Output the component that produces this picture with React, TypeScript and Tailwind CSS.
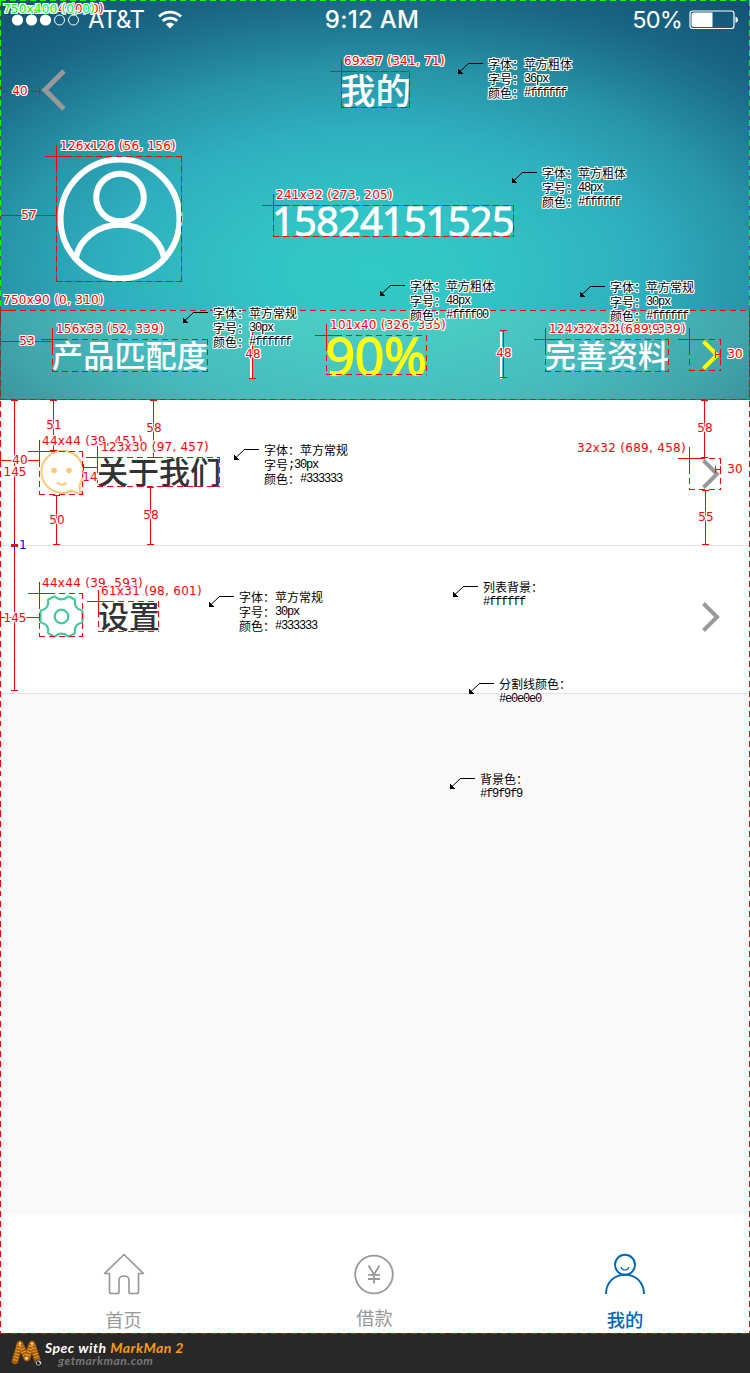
import React from "react";

type Box = { x: number; y: number; w: number; h: number };
type Tag = { text: string; x: number; y: number; w: number };
type Gauge = { dir: "h" | "v"; at: number; from: number; to: number; text: string; cx: number; cy: number };

const BOXES: Box[] = [
  { x: 341, y: 71, w: 69, h: 37 },
  { x: 56, y: 156, w: 126, h: 126 },
  { x: 273, y: 205, w: 241, h: 32 },
  { x: 0, y: 310, w: 750, h: 90 },
  { x: 52, y: 339, w: 156, h: 33 },
  { x: 326, y: 335, w: 101, h: 40 },
  { x: 545, y: 339, w: 124, h: 33 },
  { x: 689, y: 339, w: 32, h: 32 },
  { x: 39, y: 451, w: 44, h: 44 },
  { x: 97, y: 457, w: 123, h: 30 },
  { x: 689, y: 458, w: 32, h: 32 },
  { x: 39, y: 593, w: 44, h: 44 },
  { x: 98, y: 601, w: 61, h: 31 },
];

const TAGS: Tag[] = [
  { text: "69x37 (341, 71)", x: 344, y: 61, w: 101 },
  { text: "126x126 (56, 156)", x: 60, y: 146, w: 116 },
  { text: "241x32 (273, 205)", x: 276, y: 195, w: 117 },
  { text: "750x90 (0, 310)", x: 3, y: 300, w: 101 },
  { text: "156x33 (52, 339)", x: 56, y: 329, w: 108 },
  { text: "101x40 (326, 335)", x: 330, y: 325, w: 116 },
  { text: "124x32 (545, 339)", x: 549, y: 329, w: 116 },
  { text: "32x32 (689, 339)", x: 577, y: 329, w: 109 },
  { text: "44x44 (39, 451)", x: 42, y: 441, w: 101 },
  { text: "123x30 (97, 457)", x: 101, y: 447, w: 108 },
  { text: "32x32 (689, 458)", x: 577, y: 448, w: 109 },
  { text: "44x44 (39, 593)", x: 42, y: 583, w: 101 },
  { text: "61x31 (98, 601)", x: 101, y: 591, w: 101 },
];

const GAUGES: Gauge[] = [
  { dir: "h", at: 91, from: 0, to: 39, text: "40", cx: 20, cy: 91 },
  { dir: "h", at: 215, from: 0, to: 56, text: "57", cx: 29, cy: 215 },
  { dir: "h", at: 341, from: 0, to: 52, text: "53", cx: 27, cy: 341 },
  { dir: "v", at: 252, from: 331, to: 378, text: "48", cx: 253, cy: 354 },
  { dir: "v", at: 503, from: 330, to: 377, text: "48", cx: 504, cy: 353 },
  { dir: "v", at: 53, from: 400, to: 450, text: "51", cx: 54, cy: 425 },
  { dir: "v", at: 153, from: 400, to: 457, text: "58", cx: 154, cy: 428 },
  { dir: "v", at: 704, from: 400, to: 457, text: "58", cx: 705, cy: 428 },
  { dir: "h", at: 460, from: 0, to: 39, text: "40", cx: 20, cy: 460 },
  { dir: "h", at: 467, from: 83, to: 97, text: "14", cx: 90, cy: 477 },
  { dir: "v", at: 14, from: 400, to: 545, text: "145", cx: 15, cy: 472 },
  { dir: "v", at: 56, from: 495, to: 544, text: "50", cx: 57, cy: 520 },
  { dir: "v", at: 150, from: 487, to: 544, text: "58", cx: 151, cy: 515 },
  { dir: "v", at: 705, from: 490, to: 544, text: "55", cx: 706, cy: 517 },
  { dir: "h", at: 354, from: 715, to: 720, text: "30", cx: 735, cy: 354 },
  { dir: "h", at: 469, from: 715, to: 720, text: "30", cx: 735, cy: 469 },
  { dir: "h", at: 617, from: 0, to: 39, text: "", cx: 0, cy: 0 },
  { dir: "v", at: 14, from: 546, to: 690, text: "145", cx: 15, cy: 618 },
];

const NOTES: { x: number; y: number; lines: [string, string][] }[] = [
  { x: 458, y: 73, lines: [["字体：苹方粗体", ""], ["字号：", "36px"], ["颜色：", "#ffffff"]] },
  { x: 512, y: 182, lines: [["字体：苹方粗体", ""], ["字号：", "48px"], ["颜色：", "#ffffff"]] },
  { x: 183, y: 322, lines: [["字体：苹方常规", ""], ["字号：", "30px"], ["颜色：", "#ffffff"]] },
  { x: 380, y: 295, lines: [["字体：苹方粗体", ""], ["字号：", "48px"], ["颜色：", "#ffff00"]] },
  { x: 580, y: 296, lines: [["字体：苹方常规", ""], ["字号：", "30px"], ["颜色：", "#ffffff"]] },
  { x: 234, y: 459, lines: [["字体：苹方常规", ""], ["字号", ";30px"], ["颜色：", "#333333"]] },
  { x: 209, y: 606, lines: [["字体：苹方常规", ""], ["字号：", "30px"], ["颜色：", "#333333"]] },
  { x: 453, y: 596, lines: [["列表背景：", ""], ["", "#ffffff"]] },
  { x: 469, y: 693, lines: [["分割线颜色：", ""], ["", "#e0e0e0"]] },
  { x: 450, y: 788, lines: [["背景色：", ""], ["", "#f9f9f9"]] },
];

const HALO =
  "[text-shadow:1px_0_#fff,-1px_0_#fff,0_1px_#fff,0_-1px_#fff,1px_1px_#fff,-1px_-1px_#fff,1px_-1px_#fff,-1px_1px_#fff]";

const outline = (b: Box) =>
  `M${b.x} ${b.y + 0.5}H${b.x + b.w}M${b.x} ${b.y + b.h - 0.5}H${b.x + b.w}M${b.x + 0.5} ${b.y}V${b.y + b.h}M${b.x + b.w - 0.5} ${b.y}V${b.y + b.h}`;

function Label({ text, x, y, w, color }: Tag & { color: string }) {
  const natural = [...text].reduce((sum, c) => {
    if (/[0-9]/.test(c)) return sum + 7.635;
    if (c === "x") return sum + 7.1;
    if (c === "(" || c === ")") return sum + 4.68;
    return sum + 3.81;
  }, 0);
  return (
    <span
      className={`absolute whitespace-nowrap font-['DejaVu_Sans',sans-serif] text-[12px] leading-[14px] ${color} ${HALO}`}
      style={{ left: x, top: y - 7, letterSpacing: `${(w - natural) / text.length}px` }}
    >
      {text}
    </span>
  );
}

function GaugeLabel({ text, cx, cy }: { text: string; cx: number; cy: number }) {
  return (
    <span
      className={`absolute flex w-10 justify-center font-['DejaVu_Sans',sans-serif] text-[12px] leading-[14px] text-[#f00] ${HALO}`}
      style={{ left: cx - 20, top: cy - 7 }}
    >
      {text}
    </span>
  );
}

function SpecOverlay() {
  return (
    <div className="pointer-events-none absolute inset-0 overflow-hidden">
      <svg width="750" height="1373" className="absolute inset-0" fill="none" shapeRendering="crispEdges">
        <g stroke="#f00" strokeWidth="1">
          <path d="M.5 .5V1333.5M749.5 .5V1333.5M.5 1333.5H749.5" strokeDasharray="6 4" />
          {BOXES.map((b) => (
            <g key={`${b.x}-${b.y}`}>
              {b.y < 300 && <path d={outline(b)} stroke="#004b4b55" />}
              <path d={outline(b)} strokeDasharray="6 4" />
              <path d={`M${b.x - 11} ${b.y + 0.5}H${b.x + 15}M${b.x + 0.5} ${b.y - 11}V${b.y + 15}`} />
            </g>
          ))}
          {GAUGES.map((g, i) =>
            g.dir === "h" ? (
              <path key={i} d={`M${g.from} ${g.at + 0.5}H${g.to + 1}M${g.from + 0.5} ${g.at - 3}v7M${g.to + 0.5} ${g.at - 3}v7`} />
            ) : (
              <path key={i} d={`M${g.at + 0.5} ${g.from}V${g.to + 1}M${g.at - 3} ${g.from + 0.5}h7M${g.at - 3} ${g.to + 0.5}h7`} />
            )
          )}
        </g>
        <path d="M14.5 540V550" stroke="#00f" />
        <path d="M11 545H18" stroke="#f00" strokeWidth="2" />
        <path d="M.5 0V400M749.5 0V400M0 .5H750M0 399.5H750" stroke="#0a6b5088" />
        <path d="M.5 0V310M749.5 0V310M0 .5H750" stroke="#0f0" strokeDasharray="6 4" />
        <path d="M0 399.5H750M749.5 310V400" stroke="#f00" strokeDasharray="6 4" />
        <g stroke="#000">
          {NOTES.map((n) => (
            <g key={`${n.x}-${n.y}`}>
              <path shapeRendering="auto" d={`M${n.x + 2} ${n.y - 1.5}L${n.x + 10.5} ${n.y - 9.5}`} />
              <path d={`M${n.x + 10} ${n.y - 9.5}h15`} />
              <path d={`M${n.x} ${n.y - 4}v5h5z`} fill="#000" stroke="none" />
            </g>
          ))}
        </g>
      </svg>
      <Label text="750x1334 (0, 0)" x={3} y={9} w={101} color="text-[#f00]" />
      <Label text="750x400 (0, 0)" x={3} y={9} w={92} color="text-[#0f0]" />
      {TAGS.map((t) => (
        <Label key={t.text} {...t} color="text-[#f00]" />
      ))}
      {GAUGES.filter((g) => g.text).map((g, i) => (
        <GaugeLabel key={i} text={g.text} cx={g.cx} cy={g.cy} />
      ))}
      <span className={`absolute left-[19px] top-[538px] font-['DejaVu_Sans',sans-serif] text-[12px] leading-[14px] text-[#00f] ${HALO}`}>1</span>
      {NOTES.map((n) => (
        <div
          key={`${n.x}-${n.y}`}
          className={`absolute whitespace-nowrap font-['Noto_Sans_CJK_SC',sans-serif] text-[12px] leading-[14.5px] text-black ${HALO}`}
          style={{ left: n.x + 30, top: n.y - 16 }}
        >
          {n.lines.map(([cn, latin]) => (
            <div key={cn + latin} className="flex h-[14.5px] items-center">
              {cn && <span>{cn}</span>}
              {latin && <span className="font-['Liberation_Mono',monospace] text-[12px] tracking-[-1.2px]">{latin}</span>}
            </div>
          ))}
        </div>
      ))}
    </div>
  );
}

function Chevron({ className }: { className: string }) {
  return (
    <svg width="18" height="30" viewBox="0 0 18 30" fill="none" stroke="currentColor" strokeWidth="4" className={className}>
      <path d="M1.5 1.5L15 15L1.5 28.5" />
    </svg>
  );
}

function StatusBar() {
  return (
    <div className="flex h-10 items-center font-[Inter,sans-serif] text-[24px] leading-none text-white">
      <div className="flex w-[250px] items-center pl-[11px]">
        <svg width="70" height="14" viewBox="0 0 70 14" fill="#fff">
          <circle cx="6.5" cy="7" r="5.6" />
          <circle cx="20.5" cy="7" r="5.6" />
          <circle cx="34.5" cy="7" r="5.6" />
          <circle cx="48.5" cy="7" r="5" fill="none" stroke="#fff" />
          <circle cx="62.5" cy="7" r="5" fill="none" stroke="#fff" />
        </svg>
        <span className="ml-[7px] w-[57px] tracking-[-0.6px]">AT&amp;T</span>
        <svg width="24" height="19" viewBox="0 0 24 19" fill="none" stroke="#fff" strokeWidth="2.8" className="ml-[13px] -mt-[2px]">
          <path d="M1 6.6a16 16 0 0 1 22 0" />
          <path d="M4.8 11a10.4 10.4 0 0 1 14.4 0" />
          <path d="M12 18.4l-4.2-4.2a6 6 0 0 1 8.4 0z" fill="#fff" stroke="none" />
        </svg>
      </div>
      <div className="flex w-[244px] justify-center font-medium tracking-[0.3px]">9:12 AM</div>
      <div className="flex flex-1 items-center justify-end pr-[11px]">
        <span className="text-[23.5px] tracking-[-0.8px]">50%</span>
        <svg width="50" height="20" viewBox="0 0 50 20" fill="none" className="ml-[7px]">
          <rect x="1" y="1" width="44" height="17.5" rx="2.5" stroke="#fff" strokeWidth="1.2" />
          <path d="M2.5 4.5a2 2 0 0 1 2-2H23.500v14.500H4.500a2 2 0 0 1-2-2z" fill="#fff" />
          <path d="M46.500 6.500q2.500 1 2.500 3.300t-2.500 3.300z" fill="#fff" />
        </svg>
      </div>
    </div>
  );
}

function Header() {
  return (
    <header className="flex h-[400px] flex-col bg-[radial-gradient(560px_300px_at_50%_68%,#32cac5_0%,#32c4c5_20%,#2fb0bf_47%,#2895a9_67%,#207c96_80%,#1a6685_92%,#135271_112%)] font-['Noto_Sans_CJK_SC',sans-serif]">
      <StatusBar />
      <div className="flex h-[100px] items-center pl-[41px]">
        <svg width="26" height="42" viewBox="0 0 26 42" fill="none" stroke="#999" strokeWidth="5">
          <path d="M23 2L4 21L23 40" />
        </svg>
        <h1 className="-mt-[3px] ml-[273px] text-[35.500px] font-medium leading-[50px] text-white">我的</h1>
      </div>
      <div className="flex h-[170px] items-start pl-[57px] pt-[16px]">
        <svg width="126" height="126" viewBox="0 0 126 126" fill="none" stroke="#fff" strokeWidth="6">
          <circle cx="63" cy="63" r="59.5" />
          <circle cx="63" cy="41.500" r="23.800" />
          <path d="M19 102A44.500 39 0 0 1 107 102" />
        </svg>
        <span className="ml-[89px] mt-[38px] font-['Open_Sans',sans-serif] text-[40px] leading-[54px] tracking-[-0.900px] text-white [-webkit-text-stroke:0.9px_#fff]">15824151525</span>
      </div>
      <div className="flex h-[90px] items-center bg-[rgba(170,240,190,0.2)] text-[31.200px] font-medium leading-[46px] text-white">
        <span className="-mt-[2px] w-[198px] pl-[52px]">
          <span className="whitespace-nowrap">产品匹配度</span>
        </span>
        <div className="ml-[52px] h-[47px] w-[2px] bg-white" />
        <span className="flex w-[248px] justify-center font-['Open_Sans',sans-serif] text-[52px] tracking-[-0.500px] text-[#ffff14] [-webkit-text-stroke:1.4px_#ffff14]">90%</span>
        <div className="h-[47px] w-[2px] bg-white" />
        <span className="-mt-[2px] ml-[43px] whitespace-nowrap text-[31px]">完善资料</span>
        <Chevron className="ml-auto mr-[30px] text-[#ff0]" />
      </div>
    </header>
  );
}

function Smiley() {
  return (
    <svg width="45" height="45" viewBox="0 0 45 45" fill="none" stroke="#ffc877" strokeWidth="2">
      <path d="M41.500 32.500A21 21 0 1 0 33 40.500C36 42.500 39 43.500 42.500 43.200C40.500 40.500 39.800 36.500 41.500 32.500Z" />
      <circle cx="15" cy="20.500" r="2.800" fill="#ffc877" stroke="none" />
      <circle cx="30" cy="20.500" r="2.800" fill="#ffc877" stroke="none" />
      <path d="M18 32.500q5 4.500 9.500 0" />
    </svg>
  );
}

function Gear() {
  return (
    <svg width="45" height="43" viewBox="0 0 45 43" fill="none" stroke="#44c99c" strokeWidth="2.200" strokeLinejoin="round">
      <circle cx="22.500" cy="21.500" r="6.800" />
      <path d="M17 2.200C19.500 5 25.500 5 28 2.200Q29 1.200 30.500 1.800L35 4.200Q36.500 5 36 6.800C35.300 10.500 38 14.500 42 15Q43.500 15.300 43.500 17V26Q43.500 27.700 42 28C38 28.500 35.300 32.500 36 36.200Q36.500 38 35 38.800L30.500 41.200Q29 41.800 28 40.800C25.500 38 19.500 38 17 40.800Q16 41.800 14.500 41.200L10 38.800Q8.500 38 9 36.200C9.700 32.500 7 28.500 3 28Q1.500 27.700 1.500 26V17Q1.500 15.300 3 15C7 14.500 9.700 10.500 9 6.800Q8.500 5 10 4.200L14.500 1.800Q16 1.200 17 2.200Z" />
    </svg>
  );
}

function TabBar() {
  return (
    <nav className="grid h-[119px] grid-cols-3 bg-white pt-[39px] font-['Noto_Sans_CJK_SC',sans-serif] text-[18.300px] leading-[26px] text-[#999]">
      <div className="flex flex-col items-center">
        <svg width="42" height="42" viewBox="0 0 42 42" fill="none" stroke="currentColor" strokeWidth="1.700" strokeLinejoin="round" className="-ml-[2px]">
          <path d="M21 1.500L1.500 20.500H6.500V38.500q0 2 2 2H14q2 0 2-2V27q0-4 5-4t5 4V38.500q0 2 2 2H33.500q2 0 2-2V20.500H40.500Z" />
        </svg>
        <span className="-ml-[3px] mt-[11px]">首页</span>
      </div>
      <div className="flex flex-col items-center">
        <svg width="42" height="42" viewBox="0 0 42 42" fill="none" stroke="currentColor" strokeWidth="1.800" className="-ml-[2px]">
          <circle cx="21" cy="21.500" r="18.800" />
          <path d="M15.500 12.500L21 21.500L26.500 12.500M21 21.500V30.500M15 21.800H27M15 26H27" />
        </svg>
        <span className="-ml-[1px] mt-[9px]">借款</span>
      </div>
      <div className="flex flex-col items-center text-[#0068b7]">
        <svg width="42" height="42" viewBox="0 0 42 42" fill="none" stroke="currentColor" strokeWidth="1.900">
          <circle cx="21" cy="11.800" r="10" />
          <path d="M2 41C2 29.500 10 21.800 21 21.800S40 29.500 40 41" />
          <path d="M17 14q1 3 4 3t4-3" strokeWidth="1.100" />
        </svg>
        <span className="mt-[11px] font-medium">我的</span>
      </div>
    </nav>
  );
}

function Footer() {
  return (
    <footer className="flex h-10 bg-[#282828] font-[Lato,sans-serif] font-bold italic">
      <svg width="34" height="32" viewBox="0 0 34 32" fill="none" strokeLinecap="round" className="ml-[11px] mt-[6px]">
        <g stroke="#a85d08" strokeWidth="6.500">
          <path d="M9 5L4 22" />
          <path d="M9 5L16 19" />
          <path d="M21 5L16 19" />
          <path d="M21 5L27 23" />
        </g>
        <g stroke="#e7a53e" strokeWidth="4.500" strokeDasharray="1 2" strokeLinecap="butt">
          <path d="M8 6L4 22M10 7L15 19M20 7L16 19M22 6L26 20" />
        </g>
        <circle cx="9" cy="4.500" r="1.300" fill="#ffe6a0" />
        <circle cx="21" cy="4.500" r="1.300" fill="#ffe6a0" />
        <circle cx="15.500" cy="19.500" r="1.300" fill="#ffe6a0" />
        <circle cx="27.500" cy="24" r="3.200" fill="#111" />
        <circle cx="27.500" cy="24" r="2.300" stroke="#eee" strokeWidth=".8" />
        <circle cx="28.500" cy="23" r=".8" fill="#fff" />
      </svg>
      <div className="flex flex-col pt-[6px]">
        <span className="whitespace-nowrap text-[14px] leading-[17px] tracking-[0.480px] text-white">
          Spec with <span className="text-[#ff9a0c]">MarkMan 2</span>
        </span>
        <span className="pl-[13px] text-[12px] leading-[9px] tracking-[0.500px] text-[#777]">getmarkman.com</span>
      </div>
    </footer>
  );
}

export default function App() {
  return (
    <div className="relative flex h-[1373px] w-[750px] flex-col overflow-hidden bg-[#f9f9f9]">
      <Header />
      <main className="flex flex-1 flex-col font-['Noto_Sans_CJK_SC',sans-serif] text-[31px] font-medium leading-[46px] text-[#333]">
        <div className="flex h-[146px] items-center border-b border-[#e0e0e0] bg-white pl-[39px] pr-[30px]">
          <Smiley />
          <span className="-mt-[4px] ml-[13px]">关于我们</span>
          <Chevron className="ml-auto mt-[2px] text-[#999]" />
        </div>
        <div className="flex h-[148px] items-center border-b border-[#e0e0e0] bg-white pb-[6px] pl-[39px] pr-[30px]">
          <Gear />
          <span className="-mt-[4px] ml-[14px]">设置</span>
          <Chevron className="ml-auto text-[#999]" />
        </div>
      </main>
      <TabBar />
      <Footer />
      <SpecOverlay />
    </div>
  );
}
